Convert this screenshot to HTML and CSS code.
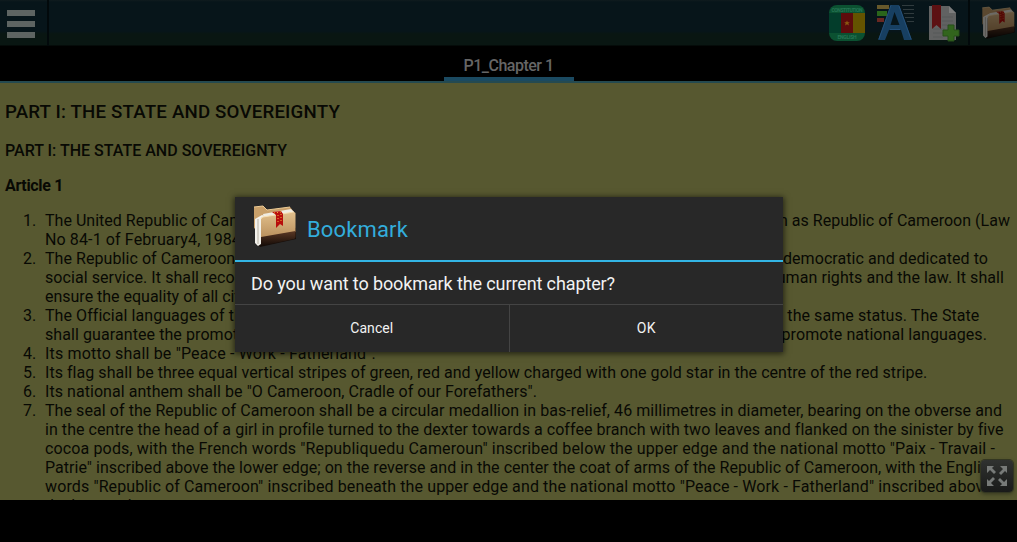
FILE: index.html
```html
<!DOCTYPE html>
<html lang="en">
<head>
<meta charset="utf-8">
<title>Constitution of Cameroon</title>
<link rel="stylesheet" href="styles.css">
</head>
<body>
<svg class="defs" aria-hidden="true">
  <defs>
    <linearGradient id="paper" x1="0" y1="0" x2="0" y2="1"><stop offset="0" stop-color="#e2c08c"/><stop offset="1" stop-color="#b98f5c"/></linearGradient>
    <linearGradient id="base" x1="0" y1="0" x2="0" y2="1"><stop offset="0" stop-color="#5b3824"/><stop offset="1" stop-color="#140b07"/></linearGradient>
    <symbol id="folder" viewBox="0 0 48 48">
      <path d="M4 20v20l5 5 36-8V26z" fill="#170e09"/>
      <path d="M3 5l9-1 4 4 23-3 4 5-33 8-7 9z" fill="#c9a06a"/>
      <path d="M3 5l9-1 4 4 23-3" stroke="#eccb95" fill="none"/>
      <path d="M12 12l28-5 3 3-30 6z" fill="#f0ece2"/>
      <path d="M4 17l7-4 3 1-4 4v24l-3 2-3-3z" fill="#f3f1eb"/>
      <path d="M7 17v25" stroke="#b5afa2" fill="none"/>
      <path d="M10 17q0-1.500 2-2l31-5q1.500 0 1.500 1.500V30L10 36z" fill="url(#paper)"/>
      <path d="M10 35l34.500-6v6q0 1.500-1.500 2L10 44z" fill="url(#base)"/>
      <path d="M10 17q0-1.500 2-2l31-5" stroke="#f8dfb2" fill="none"/>
      <path d="M21 10l9-1 2 3v12l-3-2-4 4V13z" fill="#b80d0c"/>
      <path d="M27 13v9M30 12v9M23 11l7-1" stroke="#f1b13c" stroke-dasharray="1 2" fill="none"/>
    </symbol>
  </defs>
</svg>
<div class="screen">
  <header class="bar">
    <div class="menu"><i></i><i></i><i></i></div>
    <div class="actions">
      <svg class="flag" viewBox="0 0 38 38">
        <defs><clipPath id="round"><rect x="1" y="1" width="36" height="36" rx="8"/></clipPath></defs>
        <g clip-path="url(#round)">
          <path d="M0 0h38v38H0z" fill="#0b5131"/>
          <path d="M0 9h13v20H0z" fill="#033d2b"/><path d="M13 9h12v20H13z" fill="#5d0c0c"/><path d="M25 9h13v20H25z" fill="#645300"/>
          <path d="M19 16.500l.8 1.800h2l-1.500 1.200.7 2-2-1.200-2 1.200.7-2-1.500-1.200h2z" fill="#8c5a10"/>
          <text x="19" y="7.500" class="flagtext" textLength="31">CONSTITUTION</text>
          <text x="19" y="34.500" class="flagtext" textLength="19">ENGLISH</text>
        </g>
      </svg>
      <svg class="font" viewBox="0 0 40 38">
        <path d="M1 1h12v4H1z" fill="#67592b"/><path d="M1 7h10v5H1z" fill="#2a651b"/><path d="M1 14h7v4H1z" fill="#692721"/>
        <path d="M26 1.500h12M27 5.500h11M28 9.500h10M29 13.500h9M31 17.500h7" stroke="#303b3e"/>
        <path d="M15 1h8l13 35h-8l-3-10H13L9 36H2zM18.500 8l-4 13h9z" fill="#173f61" fill-rule="evenodd"/>
        <path d="M15 1L3 35M23 2l12 33M14 25.500h10" stroke="#24507a" fill="none"/>
      </svg>
      <svg class="page" viewBox="0 0 32 38">
        <path d="M1 2h20l7 7v27H1z" fill="#616262"/>
        <path d="M21 2v7h7z" fill="#7c7c7c"/>
        <path d="M5 25h12M5 29h10M5 33h10M14 13h11M14 17h11M14 21h11" stroke="#575858" fill="none"/>
        <path d="M4 1h9v24l-4.500-4L4 25z" fill="#5c1113"/>
        <path d="M20 21h6v5h5v6h-5v5h-6v-5h-5v-6h5z" fill="#32651d" stroke="#28501a"/>
      </svg>
      <div class="mark"><svg class="mini"><use href="#folder"/></svg></div>
    </div>
  </header>
  <nav class="tabs"><div class="tab"><span data-w="90">P1_Chapter 1</span></div></nav>
  <main class="content">
    <h2 class="h-big"><span data-w="335">PART I: THE STATE AND SOVEREIGNTY</span></h2>
    <h3 class="h-mid"><span data-w="282">PART I: THE STATE AND SOVEREIGNTY</span></h3>
    <h3 class="h-small"><span data-w="58">Article 1</span></h3>
    <ol class="list">
      <li><span data-w="965">The United Republic of Cameroon shall, with effect from the date of entry into force of this law, be known as Republic of Cameroon (Law</span><span data-w="206">No 84-1 of February4, 1984).</span></li>
      <li><span data-w="943">The Republic of Cameroon shall be a decentralized unitary State. It shall be one and indivisible, secular, democratic and dedicated to</span><span data-w="959">social service. It shall recognize and protect traditional values that conform to democratic principles, human rights and the law. It shall</span><span data-w="340">ensure the equality of all citizens before the law.</span></li>
      <li><span data-w="933">The Official languages of the Republic of Cameroon shall be English and French, both languages having the same status. The State</span><span data-w="942">shall guarantee the promotion of bilingualism throughout the country. It shall endeavour to protect and promote national languages.</span></li>
      <li><span data-w="331">Its motto shall be "Peace - Work - Fatherland".</span></li>
      <li><span data-w="882">Its flag shall be three equal vertical stripes of green, red and yellow charged with one gold star in the centre of the red stripe.</span></li>
      <li><span data-w="492">Its national anthem shall be "O Cameroon, Cradle of our Forefathers".</span></li>
      <li><span data-w="957">The seal of the Republic of Cameroon shall be a circular medallion in bas-relief, 46 millimetres in diameter, bearing on the obverse and</span><span data-w="957">in the centre the head of a girl in profile turned to the dexter towards a coffee branch with two leaves and flanked on the sinister by five</span><span data-w="950">cocoa pods, with the French words "Republiquedu Cameroun" inscribed below the upper edge and the national motto "Paix - Travail -</span><span data-w="953">Patrie" inscribed above the lower edge; on the reverse and in the center the coat of arms of the Republic of Cameroon, with the English</span><span data-w="947">words "Republic of Cameroon" inscribed beneath the upper edge and the national motto "Peace - Work - Fatherland" inscribed above</span><span data-w="108">the lower edge.</span></li>
    </ol>
  </main>
  <div class="expand">
    <svg viewBox="0 0 32 32"><path d="M6 6h7l-2 2 4 4-2 2-4-4-3 3zM26 6v7l-2-2-4 4-2-2 4-4-3-3zM6 26v-7l2 2 4-4 2 2-4 4 3 3zM26 26h-7l2-2-4-4 2-2 4 4 3-3z" fill="#777a78"/></svg>
  </div>
  <section class="dialog">
    <div class="title"><svg class="big"><use href="#folder"/></svg><span class="name" data-w="101">Bookmark</span></div>
    <div class="message"><span data-w="364">Do you want to bookmark the current chapter?</span></div>
    <div class="buttons"><div><span data-w="43">Cancel</span></div><div><span data-w="19">OK</span></div></div>
  </section>
</div>
<script src="fit.js"></script>
</body>
</html>
```
FILE: styles.css
```css
* { box-sizing: border-box; }
body { margin: 0; background: #000; font-family: Roboto, "Liberation Sans", sans-serif; }
.defs { position: absolute; width: 0; height: 0; }
.screen { position: relative; width: 1017px; height: 542px; overflow: hidden; background: #000; }
span[data-w] { white-space: nowrap; }
.bar { display: flex; justify-content: space-between; height: 46px; background: linear-gradient(#101b1e 0, #07151a 2px, #07151a 31px, #091612 34px, #091612 45px, #000 46px); }
.menu { display: flex; flex-direction: column; gap: 5px; width: 49px; padding: 10px 0 0 7px; border-right: 2px solid #02090b; }
.menu i { width: 28px; height: 6px; background: #5e6462; }
.actions { display: flex; }
.actions > svg { flex: none; margin-top: 4px; }
.flag { width: 38px; height: 38px; margin-right: 10px; }
.flagtext { font: 700 5px Roboto, sans-serif; text-anchor: middle; fill: #267554; }
.font { width: 40px; height: 38px; margin-right: 12px; }
.page { width: 32px; height: 38px; margin-right: 8px; }
.mark { width: 49px; height: 45px; border-left: 2px solid #02090b; padding: 4px 0 0 10px; }
.mini { width: 37px; height: 37px; display: block; filter: brightness(.45); }
.tabs { display: flex; justify-content: center; height: 37px; border-bottom: 2px solid #254a50; }
.tab { width: 130px; height: 35px; border-bottom: 4px solid #1b4a61; padding-top: 10px; text-align: center; font-size: 16px; font-weight: 500; line-height: 20px; color: #666; }
.content { height: 417px; overflow: hidden; background: #575830; color: #080904; padding: 17px 5px 0; }
.content h2, .content h3 { margin: 0; font-weight: 700; }
.content .h-big { font-size: 18.7px; line-height: 24px; margin-bottom: 17px; font-weight: 500; }
.content .h-mid { font-size: 16px; line-height: 20px; margin-bottom: 15px; font-weight: 500; }
.content .h-small { font-size: 16px; line-height: 20px; margin-bottom: 15px; }
.list { margin: 0; padding-left: 40px; font-size: 16px; line-height: 19px; }
.list span { display: table; }
.list li { list-style: none; counter-increment: item; display: grid; grid-template-columns: 1fr; }
.list li::before { content: counter(item) "."; grid-row: 1; grid-column: 1; margin-left: -22px; }
.list li span:first-of-type { grid-row: 1; grid-column: 1; justify-self: start; }
.list li span { justify-self: start; }
.expand { position: absolute; left: 981px; top: 460px; width: 32px; height: 32px; border-radius: 4px; background: linear-gradient(#303230, #191a19); box-shadow: 0 0 0 1px #333621, 0 2px 4px #33361f; }
.expand svg { display: block; }
.dialog { position: absolute; left: 235px; top: 197px; width: 548px; height: 155px; background: #282828; box-shadow: 0 1px 6px 1px rgba(0, 0, 0, .6); color: #f2f2f2; }
.title { display: flex; align-items: center; height: 65px; padding-left: 16px; border-bottom: 2px solid #33b5e5; color: #33addb; font-size: 22px; gap: 8px; }
.name { padding-top: 2px; }
.big { width: 48px; height: 48px; margin-top: -5px; }
.message { height: 42px; padding: 10px 0 0 16px; font-size: 18px; line-height: 24px; }
.buttons { display: flex; height: 48px; border-top: 1px solid #444; font-size: 14px; line-height: 47px; text-align: center; }
.buttons div { flex: 1; }
.buttons div + div { border-left: 1px solid #444; }
```
FILE: fit.js
```js
document.querySelectorAll('[data-w]').forEach(function (el) {
  var target = Number(el.dataset.w);
  var width = el.getBoundingClientRect().width;
  el.style.letterSpacing = (target - width) / el.textContent.length + 'px';
});
```
